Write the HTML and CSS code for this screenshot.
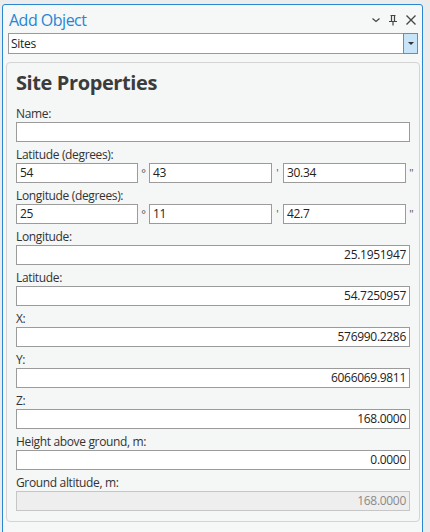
FILE: index.html
```html
<!DOCTYPE html>
<html>
<head>
<meta charset="utf-8">
<link rel="stylesheet" href="styles.css">
</head>
<body>
<div class="panel">
  <div class="header">
    <div class="title">Add Object</div>
    <div class="tools">
      <svg class="ico" width="10" height="10" viewBox="0 0 10 10"><path d="M1.5 3.5 L5 6.5 L8.5 3.5" fill="none" stroke="#444" stroke-width="1.2"/></svg>
      <svg class="ico" width="10" height="12" viewBox="0 0 10 12"><path d="M2.5 1.5 H7.5 M3.5 1.5 V7 M6.5 1.5 V7 M1 7.5 H9 M5 7.5 V11.5" fill="none" stroke="#444" stroke-width="1.2"/></svg>
      <svg class="ico" width="12" height="12" viewBox="0 0 12 12"><path d="M1.5 1.5 L10.5 10.5 M10.5 1.5 L1.5 10.5" fill="none" stroke="#444" stroke-width="1.3"/></svg>
    </div>
  </div>
  <div class="combo">
    <div class="combo-text">Sites</div>
    <div class="combo-btn"><span class="arrow"></span></div>
  </div>
  <div class="group">
    <div class="heading">Site Properties</div>
    <div class="field">
      <div class="label">Name:</div>
      <div class="input"></div>
    </div>
    <div class="field">
      <div class="label">Latitude (degrees):</div>
      <div class="dms">
        <div class="input small">54</div><span class="sep">°</span>
        <div class="input small">43</div><span class="sep">'</span>
        <div class="input small">30.34</div><span class="sep">"</span>
      </div>
    </div>
    <div class="field">
      <div class="label">Longitude (degrees):</div>
      <div class="dms">
        <div class="input small">25</div><span class="sep">°</span>
        <div class="input small">11</div><span class="sep">'</span>
        <div class="input small">42.7</div><span class="sep">"</span>
      </div>
    </div>
    <div class="field">
      <div class="label">Longitude:</div>
      <div class="input num">25.1951947</div>
    </div>
    <div class="field">
      <div class="label">Latitude:</div>
      <div class="input num">54.7250957</div>
    </div>
    <div class="field">
      <div class="label">X:</div>
      <div class="input num">576990.2286</div>
    </div>
    <div class="field">
      <div class="label">Y:</div>
      <div class="input num">6066069.9811</div>
    </div>
    <div class="field">
      <div class="label">Z:</div>
      <div class="input num">168.0000</div>
    </div>
    <div class="field">
      <div class="label">Height above ground, m:</div>
      <div class="input num">0.0000</div>
    </div>
    <div class="field">
      <div class="label">Ground altitude, m:</div>
      <div class="input num disabled">168.0000</div>
    </div>
  </div>
</div>
</body>
</html>
```
FILE: styles.css
```css
html, body {
  margin: 0;
  padding: 0;
  background: #ececec;
  overflow: hidden;
  height: 532px;
}
body {
  font-family: "Open Sans", "Noto Sans", "Liberation Sans", sans-serif;
  font-size: 12px;
  color: #222;
}
.panel {
  margin: 4px 0 0 2px;
  width: 421px;
  height: 540px;
  box-sizing: border-box;
  border: 1px solid #2a86d2;
  border-radius: 3px 3px 0 0;
  background: #f6f7f7;
  padding: 0;
}
.header {
  display: flex;
  align-items: center;
  justify-content: space-between;
  height: 28px;
}
.title {
  color: #2586d4;
  font-size: 16px;
  padding-left: 6px;
  letter-spacing: -0.5px;
  line-height: 28px;
  margin-top: 2px;
}
.tools {
  display: flex;
  align-items: center;
  gap: 7px;
  padding-right: 5px;
  margin-top: 2px;
}
.ico { display: block; }
.combo {
  display: flex;
  height: 21px;
  margin-left: 5px;
  width: 410px;
  box-sizing: border-box;
  border: 1px solid #9a9a9a;
  background: #fff;
}
.combo-text {
  flex: 1;
  padding-left: 2px;
  line-height: 19px;
  letter-spacing: -0.3px;
}
.combo-btn {
  width: 15px;
  margin: -1px -1px -1px 0;
  box-sizing: border-box;
  border: 1px solid #3a9be3;
  background: #c7e4f8;
  display: flex;
  align-items: center;
  justify-content: center;
}
.arrow {
  width: 0;
  height: 0;
  border-left: 3px solid transparent;
  border-right: 3px solid transparent;
  border-top: 3px solid #333;
}
.group {
  margin: 8px 0 0 3px;
  width: 414px;
  box-sizing: border-box;
  border: 1px solid #d4d4d4;
  border-radius: 4px;
  background: #f5f6f6;
  padding: 0 9px 10px 9px;
}
.heading {
  font-weight: bold;
  font-size: 20px;
  color: #3c3c3c;
  height: 38px;
  line-height: 40px;
  letter-spacing: -0.4px;
}
.label {
  height: 21px;
  line-height: 26px;
  color: #333;
  letter-spacing: -0.35px;
  white-space: nowrap;
}
.input {
  height: 20px;
  box-sizing: border-box;
  border: 1px solid #9b9b9b;
  background: #fff;
  line-height: 18px;
  padding: 0 3px;
  letter-spacing: -0.3px;
}
.num { text-align: right; }
.disabled {
  background: #eeeeee;
  border-color: #c6c6c6;
  color: #8a8a8a;
}
.dms {
  display: flex;
  width: 402px;
}
.input.small {
  width: 123px;
}
.dms .input.small:first-child { width: 122px; }
.sep {
  width: 11px;
  text-align: center;
  line-height: 20px;
  color: #555;
  font-size: 11px;
}
```
